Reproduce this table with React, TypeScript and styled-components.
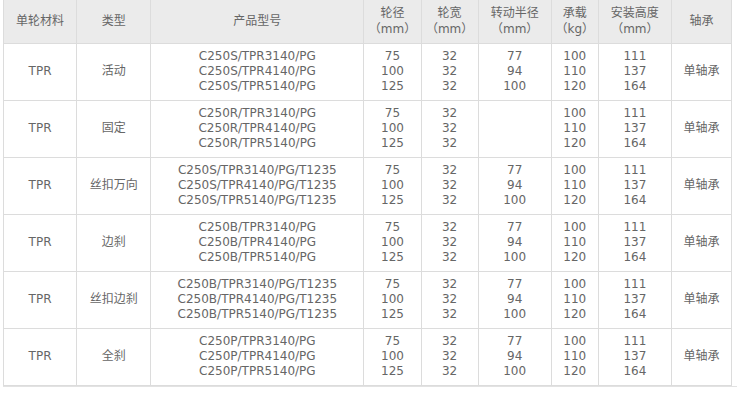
import styled, { createGlobalStyle } from "styled-components";

const GlobalStyle = createGlobalStyle`
  body {
    margin: 0;
    background: #ffffff;
    font-family: "DejaVu Sans", "Noto Sans CJK SC", sans-serif;
  }
`;

type Row = {
  material: string;
  type: string;
  models: string[];
  diameter: string[];
  width: string[];
  radius: string[];
  load: string[];
  height: string[];
  bearing: string;
};

const diameter = ["75", "100", "125"];
const width = ["32", "32", "32"];
const radius = ["77", "94", "100"];
const load = ["100", "110", "120"];
const height = ["111", "137", "164"];

const models = (prefix: string, suffix: string) =>
  ["3140", "4140", "5140"].map((n) => `${prefix}/TPR${n}/PG${suffix}`);

const rows: Row[] = [
  { material: "TPR", type: "活动", models: models("C250S", ""), diameter, width, radius, load, height, bearing: "单轴承" },
  { material: "TPR", type: "固定", models: models("C250R", ""), diameter, width, radius: [], load, height, bearing: "单轴承" },
  { material: "TPR", type: "丝扣万向", models: models("C250S", "/T1235"), diameter, width, radius, load, height, bearing: "单轴承" },
  { material: "TPR", type: "边刹", models: models("C250B", ""), diameter, width, radius, load, height, bearing: "单轴承" },
  { material: "TPR", type: "丝扣边刹", models: models("C250B", "/T1235"), diameter, width, radius, load, height, bearing: "单轴承" },
  { material: "TPR", type: "全刹", models: models("C250P", ""), diameter, width, radius, load, height, bearing: "单轴承" },
];

const columns = [73, 74, 213, 57, 57, 73, 47, 73, 60];

const headers: string[][] = [
  ["单轮材料"],
  ["类型"],
  ["产品型号"],
  ["轮径", "（mm）"],
  ["轮宽", "（mm）"],
  ["转动半径", "（mm）"],
  ["承载", "（kg）"],
  ["安装高度", "（mm）"],
  ["轴承"],
];

function Lines({ items }: { items: string[] }) {
  return (
    <>
      {items.map((t, i) => (
        <Line key={i}>{t}</Line>
      ))}
    </>
  );
}

function App() {
  return (
    <>
      <GlobalStyle />
      <Frame>
        <Table>
          <colgroup>
            {columns.map((w, i) => (
              <col key={i} style={{ width: w }} />
            ))}
          </colgroup>
          <thead>
            <HeadRow>
              {headers.map((h, i) => (
                <HeadCell key={i}>
                  <Lines items={h} />
                </HeadCell>
              ))}
            </HeadRow>
          </thead>
          <tbody>
            {rows.map((r, i) => (
              <BodyRow key={i}>
                <Cell>{r.material}</Cell>
                <Cell>{r.type}</Cell>
                <Cell>
                  <Lines items={r.models} />
                </Cell>
                <Cell>
                  <Lines items={r.diameter} />
                </Cell>
                <Cell>
                  <Lines items={r.width} />
                </Cell>
                <Cell>
                  <Lines items={r.radius} />
                </Cell>
                <Cell>
                  <Lines items={r.load} />
                </Cell>
                <Cell>
                  <Lines items={r.height} />
                </Cell>
                <Cell>{r.bearing}</Cell>
              </BodyRow>
            ))}
          </tbody>
        </Table>
      </Frame>
    </>
  );
}

export default App;

const Frame = styled.div`
  width: 734px;
  margin-left: 3px;
  border-bottom: 1px solid #e2e2e2;
`;

const Table = styled.table`
  width: 729px;
  table-layout: fixed;
  border-collapse: collapse;
  border-left: 1px solid #e6e6e6;
  font-size: 12px;
  color: #666666;
`;

const HeadRow = styled.tr`
  height: 43px;
  background: #ebebeb;
`;

const HeadCell = styled.th`
  font-weight: normal;
  text-align: center;
  vertical-align: middle;
  padding: 0;
  border: 1px solid #dcdcdc;
  border-top: none;
  line-height: 16px;
`;

const BodyRow = styled.tr`
  height: 57px;
`;

const Cell = styled.td`
  text-align: center;
  vertical-align: middle;
  padding: 0;
  border: 1px solid #dcdcdc;
  line-height: 15px;
  white-space: nowrap;
`;

const Line = styled.div`
  line-height: inherit;
`;
